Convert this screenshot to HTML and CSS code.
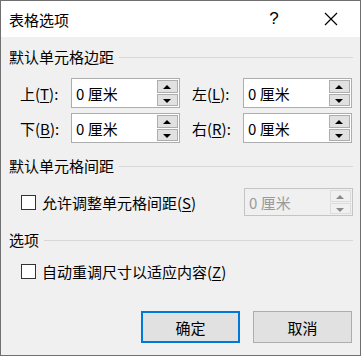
FILE: index.html
```html
<!DOCTYPE html>
<html lang="zh-CN">
<head>
    <meta charset="UTF-8">
    <title>表格选项</title>
    <link rel="stylesheet" href="styles.css">
</head>
<body>
    <div class="dialog">
        <div class="titlebar">
            <span class="title">表格选项</span>
            <span class="help">?</span>
            <span class="close">
                <svg width="14" height="14" viewBox="0 0 14 14"><path d="M1 1L13 13M13 1L1 13" stroke="#000" stroke-width="1.2" fill="none"/></svg>
            </span>
        </div>
        <div class="content">
            <div class="group-title">默认单元格边距<span class="rule"></span></div>
            <div class="margins">
                <label>上(<u>T</u>):</label>
                <div class="spin"><span class="value">0 厘米</span><div class="buttons"><span class="up"></span><span class="down"></span></div></div>
                <label class="right">左(<u>L</u>):</label>
                <div class="spin"><span class="value">0 厘米</span><div class="buttons"><span class="up"></span><span class="down"></span></div></div>
                <label>下(<u>B</u>):</label>
                <div class="spin"><span class="value">0 厘米</span><div class="buttons"><span class="up"></span><span class="down"></span></div></div>
                <label class="right">右(<u>R</u>):</label>
                <div class="spin"><span class="value">0 厘米</span><div class="buttons"><span class="up"></span><span class="down"></span></div></div>
            </div>

            <div class="group-title second">默认单元格间距<span class="rule"></span></div>
            <div class="check-row">
                <span class="box"></span>
                <span>允许调整单元格间距(<u>S</u>)</span>
                <div class="spin disabled"><span class="value">0 厘米</span><div class="buttons"><span class="up"></span><span class="down"></span></div></div>
            </div>

            <div class="group-title third">选项<span class="rule"></span></div>
            <div class="check-row single">
                <span class="box"></span>
                <span>自动重调尺寸以适应内容(<u>Z</u>)</span>
            </div>

            <div class="actions">
                <button class="ok">确定</button>
                <button>取消</button>
            </div>
        </div>
    </div>
</body>
</html>
```
FILE: styles.css
```css
* {
    box-sizing: border-box;
}
body {
    margin: 0;
    font-family: "Noto Sans CJK SC", "Noto Sans", sans-serif;
    font-size: 15px;
    color: #000;
}
u {
    text-decoration-thickness: 1px;
    text-underline-offset: 2px;
}
.dialog {
    width: 361px;
    height: 356px;
    border: 1px solid #707070;
    background-color: #f0f0f0;
    display: flex;
    flex-direction: column;
}
.titlebar {
    height: 36px;
    background-color: #fff;
    display: flex;
    align-items: center;
    padding-left: 8px;
}
.title {
    flex-grow: 1;
}
.help {
    width: 20px;
    text-align: center;
    font-family: "Liberation Sans", sans-serif;
    font-size: 17px;
    margin-right: 37px;
}
.close {
    width: 20px;
    margin-right: 19px;
    display: flex;
    justify-content: center;
}
.content {
    flex-grow: 1;
    padding: 10px 7px 0 8px;
    display: flex;
    flex-direction: column;
}
.group-title {
    display: flex;
    align-items: center;
    height: 20px;
    line-height: 20px;
}
.group-title .rule {
    flex-grow: 1;
    height: 1px;
    margin-left: 5px;
    background-color: #d7d7d7;
}
.group-title.second {
    margin-top: 13px;
}
.group-title.third {
    margin-top: 14px;
}
.margins {
    display: grid;
    grid-template-columns: 51px 109px 63px 109px;
    row-gap: 5px;
    margin: 11px 0 0 11px;
}
.margins label {
    display: flex;
    align-items: center;
    white-space: nowrap;
}
.margins label.right {
    padding-left: 12px;
}
.spin {
    height: 30px;
    border: 1px solid #adadad;
    background-color: #fff;
    display: flex;
    align-items: center;
    padding: 1px;
}
.spin .value {
    flex-grow: 1;
    padding-left: 3px;
}
.spin .buttons {
    width: 21px;
    height: 100%;
    display: flex;
    flex-direction: column;
    gap: 1px;
}
.buttons span {
    flex-grow: 1;
    background-color: #e1e1e1;
    border: 1px solid #adadad;
    position: relative;
}
.buttons span::after {
    content: "";
    position: absolute;
    left: 5px;
    top: 4px;
    border-left: 4px solid transparent;
    border-right: 4px solid transparent;
}
.buttons .up::after {
    border-bottom: 4px solid #000;
}
.buttons .down::after {
    border-top: 4px solid #000;
}
.spin.disabled {
    width: 109px;
    height: 28px;
    margin-left: auto;
    background-color: #f0f0f0;
    border-color: #c4c4c4;
    color: #9a9a9a;
}
.spin.disabled .buttons span {
    background-color: #f0f0f0;
    border-color: #dcdcdc;
}
.spin.disabled .up::after {
    border-bottom-color: #8a8a8a;
}
.spin.disabled .down::after {
    border-top-color: #8a8a8a;
}
.check-row {
    display: flex;
    align-items: center;
    height: 28px;
    margin: 12px 0 0 12px;
}
.check-row.single {
    height: 20px;
    margin-top: 11px;
}
.check-row .box {
    width: 15px;
    height: 15px;
    border: 1px solid #333;
    background-color: #fff;
    margin-right: 6px;
}
.actions {
    display: flex;
    justify-content: flex-end;
    gap: 13px;
    margin: 30px 1px 0 0;
}
.actions button {
    width: 99px;
    height: 32px;
    font-family: inherit;
    font-size: 15px;
    background-color: #e1e1e1;
    border: 1px solid #adadad;
}
.actions .ok {
    border: 2px solid #0078d7;
}
```
